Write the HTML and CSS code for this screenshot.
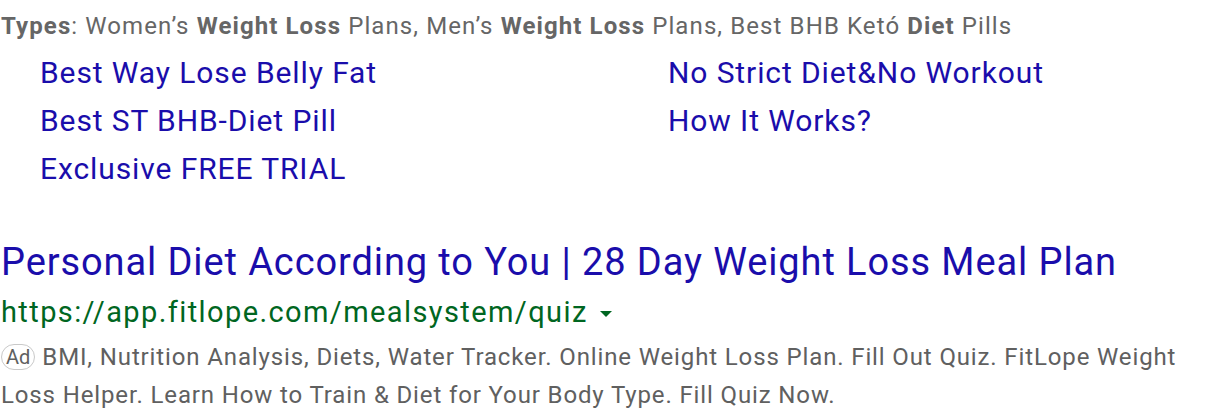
FILE: index.html
```html
<!DOCTYPE html>
<html>
<head>
<meta charset="utf-8">
<link rel="stylesheet" href="styles.css">
</head>
<body>
<div class="ad">
  <div class="types"><b>Types</b>: Women’s <b>Weight Loss</b> Plans, Men’s <b>Weight Loss</b> Plans, Best BHB Ketó <b>Diet</b> Pills</div>
  <div class="sitelinks">
    <a class="sl">Best Way Lose Belly Fat</a>
    <a class="sl">No Strict Diet&amp;No Workout</a>
    <a class="sl">Best ST BHB-Diet Pill</a>
    <a class="sl">How It Works?</a>
    <a class="sl">Exclusive FREE TRIAL</a>
  </div>
  <div class="title">Personal Diet According to You | 28 Day Weight Loss Meal Plan</div>
  <div class="url">https://app.fitlope.com/mealsystem/quiz<span class="arrow"></span></div>
  <div class="desc"><span class="badge">Ad</span><span class="desc-text">BMI, Nutrition Analysis, Diets, Water Tracker. Online Weight Loss Plan. Fill Out Quiz. FitLope Weight Loss Helper. Learn How to Train &amp; Diet for Your Body Type. Fill Quiz Now.</span></div>
</div>
</body>
</html>
```
FILE: styles.css
```css
html, body {
  margin: 0;
  padding: 0;
  background: #fff;
}
body {
  font-family: Roboto, "Liberation Sans", sans-serif;
  width: 1216px;
  height: 410px;
  overflow: hidden;
}
.ad {
  padding: 8px 0 0 1px;
}
.types {
  font-size: 24px;
  letter-spacing: 1.1px;
  line-height: 36px;
  color: #666;
}
.types b {
  font-weight: 700;
}
.sitelinks {
  display: grid;
  grid-template-columns: 628px 1fr;
  padding-left: 39px;
  margin-top: 5px;
}
.sl {
  font-size: 30px;
  letter-spacing: 0.9px;
  line-height: 48px;
  color: #1a0dab;
}
.title {
  margin-top: 44px;
  font-size: 38px;
  letter-spacing: 0.9px;
  line-height: 50px;
  color: #1a0dab;
}
.url {
  font-size: 29px;
  letter-spacing: 1.4px;
  line-height: 50px;
  color: #006621;
  display: flex;
  align-items: center;
}
.arrow {
  display: inline-block;
  width: 0;
  height: 0;
  margin-left: 12px;
  margin-top: 4px;
  border-left: 6px solid transparent;
  border-right: 6px solid transparent;
  border-top: 6px solid #006621;
}
.desc {
  margin-top: 1px;
  font-size: 24px;
  letter-spacing: 0.87px;
  line-height: 38px;
  color: #606060;
  width: 1200px;
}
.badge {
  display: inline-block;
  vertical-align: 1px;
  font-size: 20px;
  letter-spacing: 0;
  line-height: 22px;
  padding: 1px 4px;
  margin-right: 7px;
  border: 1px solid #c9c9c9;
  border-radius: 13px;
  color: #606060;
}
```
